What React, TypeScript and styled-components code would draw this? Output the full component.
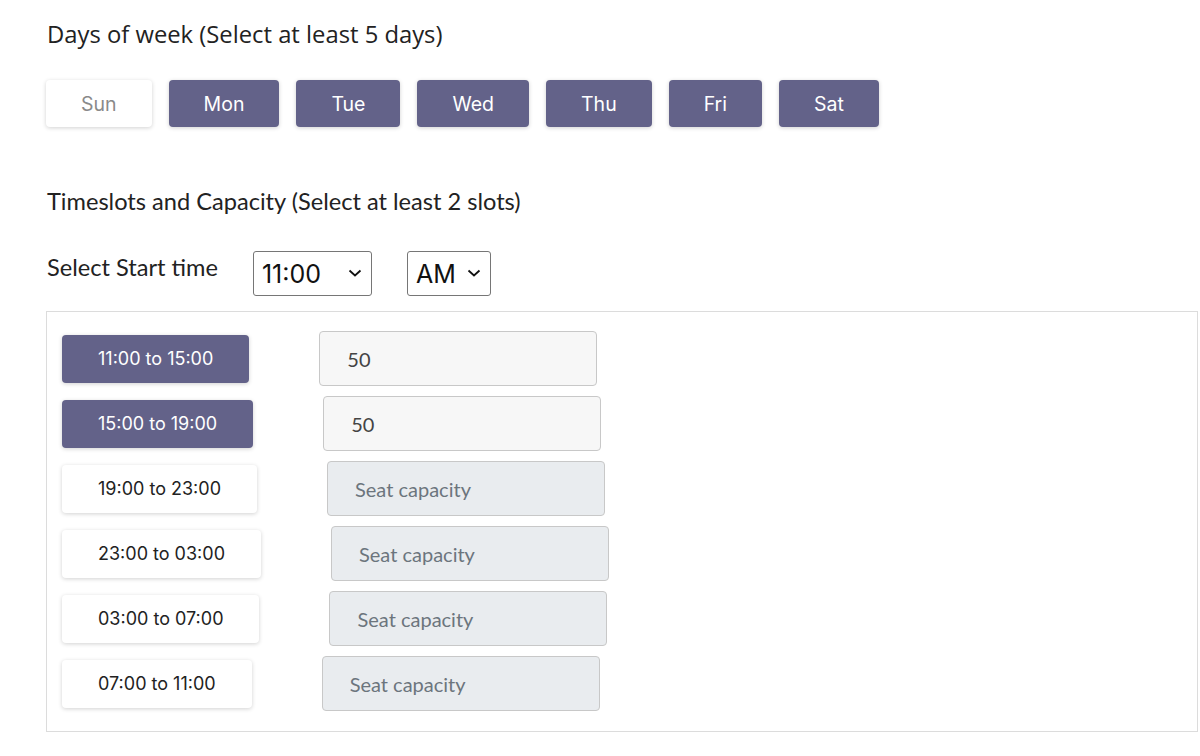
import * as React from "react";
import styled, { createGlobalStyle } from "styled-components";

const GlobalStyle = createGlobalStyle`
  html, body {
    margin: 0;
    padding: 0;
    background: #ffffff;
  }
`;

const PURPLE = "#636289";

const days = ["Sun", "Mon", "Tue", "Wed", "Thu", "Fri", "Sat"];

const slots = [
  { label: "11:00 to 15:00", value: "50" },
  { label: "15:00 to 19:00", value: "50" },
  { label: "19:00 to 23:00", value: "" },
  { label: "23:00 to 03:00", value: "" },
  { label: "03:00 to 07:00", value: "" },
  { label: "07:00 to 11:00", value: "" },
];

/* ---------- styled ---------- */

const Page = styled.div`
  padding: 19px 2px 24px 46px;
  color: #222222;
`;

const DaysTitle = styled.h3`
  margin: 0 0 0 1px;
  font-family: "Open Sans", "Liberation Sans", sans-serif;
  font-size: 23.8px;
  font-weight: 400;
  line-height: 30px;
  color: #222222;
`;

const SectionTitle = styled.h3`
  margin: 0 0 0 1px;
  font-family: Lato, "Liberation Sans", sans-serif;
  font-size: 23.6px;
  font-weight: 400;
  line-height: 30px;
  color: #222222;
`;

const DayRow = styled.div`
  display: flex;
  gap: 17px;
  margin: 31px 0 59px;
`;

const Chip = styled.button<{ $active: boolean }>`
  height: 47px;
  padding: 0 35px;
  border: none;
  border-radius: 4px;
  background: ${({ $active }) => ($active ? PURPLE : "#ffffff")};
  color: ${({ $active }) => ($active ? "#ffffff" : "#8a8a8a")};
  box-shadow: 0 1px 4px rgba(0, 0, 0, 0.18);
  font-family: Inter, "Noto Sans", sans-serif;
  font-size: 19.5px;
  font-weight: 400;
  cursor: pointer;
  white-space: nowrap;
`;

const StartRow = styled.div`
  display: flex;
  align-items: flex-start;
  margin: 35px 0 15px;
`;

const StartLabel = styled.div`
  margin: 1px 35px 0 1px;
  font-family: Lato, "Liberation Sans", sans-serif;
  font-size: 23.6px;
  line-height: 30px;
  color: #222222;
`;

const SelectWrap = styled.div<{ $w: number }>`
  position: relative;
  width: ${({ $w }) => $w}px;
  margin-right: 35px;
`;

const TimeSelect = styled.select`
  width: 100%;
  height: 45px;
  padding: 0 0 0 8px;
  border: 1px solid #767676;
  border-radius: 3px;
  background: #ffffff;
  appearance: none;
  font-family: Inter, "Noto Sans", sans-serif;
  font-size: 25px;
  color: #111111;
  outline: none;
`;

const Chevron = styled.svg`
  position: absolute;
  right: 10px;
  top: 17px;
  pointer-events: none;
`;

const SlotBox = styled.div`
  border: 1px solid #dcdcdc;
  padding: 19px 15px 20px;
  display: flex;
  flex-direction: column;
  gap: 10px;
`;

const SlotRow = styled.div`
  display: flex;
  align-items: center;
`;

const SlotButton = styled(Chip)`
  height: 48px;
  padding: 0 36px;
  font-size: 18px;
  color: ${({ $active }) => ($active ? "#ffffff" : "#222222")};
  margin-right: 70px;
`;

const CapacityInput = styled.input<{ $filled: boolean }>`
  width: 278px;
  height: 55px;
  box-sizing: border-box;
  padding: 0 0 0 27px;
  border: 1px solid #c8c8c8;
  border-radius: 4px;
  background: ${({ $filled }) => ($filled ? "#f7f7f7" : "#e9ecef")};
  font-family: Lato, "Liberation Sans", sans-serif;
  font-size: 20px;
  color: #444444;
  outline: none;

  &::placeholder {
    color: #6c757d;
  }
`;

/* ---------- component ---------- */

const ChevronIcon = () => (
  <Chevron width="14" height="10" viewBox="0 0 14 10">
    <path d="M1.5 2.5 L7 7.5 L12.5 2.5" fill="none" stroke="#111" strokeWidth="1.8" />
  </Chevron>
);

export default function App() {
  const [selectedDays, setSelectedDays] = React.useState<string[]>(days.slice(1));

  const toggleDay = (d: string) =>
    setSelectedDays((prev) => (prev.includes(d) ? prev.filter((x) => x !== d) : [...prev, d]));

  return (
    <>
      <GlobalStyle />
      <Page>
        <DaysTitle>Days of week (Select at least 5 days)</DaysTitle>
        <DayRow>
          {days.map((d) => (
            <Chip key={d} $active={selectedDays.includes(d)} onClick={() => toggleDay(d)}>
              {d}
            </Chip>
          ))}
        </DayRow>

        <SectionTitle>Timeslots and Capacity (Select at least 2 slots)</SectionTitle>
        <StartRow>
          <StartLabel>Select Start time</StartLabel>
          <SelectWrap $w={119}>
            <TimeSelect defaultValue="11:00">
              <option>11:00</option>
              <option>12:00</option>
            </TimeSelect>
            <ChevronIcon />
          </SelectWrap>
          <SelectWrap $w={84}>
            <TimeSelect defaultValue="AM">
              <option>AM</option>
              <option>PM</option>
            </TimeSelect>
            <ChevronIcon />
          </SelectWrap>
        </StartRow>

        <SlotBox>
          {slots.map((s) => (
            <SlotRow key={s.label}>
              <SlotButton $active={s.value !== ""}>{s.label}</SlotButton>
              <CapacityInput
                $filled={s.value !== ""}
                defaultValue={s.value}
                placeholder="Seat capacity"
              />
            </SlotRow>
          ))}
        </SlotBox>
      </Page>
    </>
  );
}
